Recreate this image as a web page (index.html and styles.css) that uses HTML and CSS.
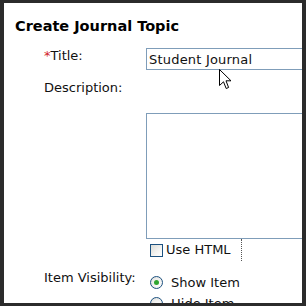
FILE: index.html
```html
<!DOCTYPE html>
<html lang="en">
<head>
    <meta charset="UTF-8">
    <title>Create Journal Topic</title>
    <link rel="stylesheet" href="styles.css">
</head>
<body>
    <div class="panel">
        <h2 class="page-title">Create Journal Topic</h2>

        <div class="form">
            <div class="row">
                <label class="label" for="topicTitle"><span class="req">*</span>Title:</label>
                <div class="field">
                    <input class="text-input" id="topicTitle" type="text" value="Student Journal">
                </div>
            </div>

            <div class="row row-desc">
                <label class="label" for="topicDesc">Description:</label>
                <div class="field field-desc">
                    <textarea class="editor" id="topicDesc"></textarea>
                    <div class="editor-foot">
                        <span class="checkbox"></span>
                        <span class="check-text">Use HTML</span>
                        <span class="sep"></span>
                    </div>
                </div>
            </div>

            <div class="row row-vis">
                <div class="label">Item Visibility:</div>
                <div class="field radios">
                    <div class="radio-row">
                        <span class="radio checked"></span>
                        <span>Show Item</span>
                    </div>
                    <div class="radio-row">
                        <span class="radio"></span>
                        <span>Hide Item</span>
                    </div>
                </div>
            </div>
        </div>

        <!-- mouse pointer over the title box -->
        <svg class="cursor" width="13" height="21" viewBox="0 0 13 21">
            <path d="M0.5 0.5 L0.5 16.5 L4.5 12.8 L7.2 19.5 L9.6 18.5 L7 11.8 L12 11.8 Z" fill="#fff" stroke="#000" stroke-width="1" stroke-linejoin="miter"/>
        </svg>
    </div>
</body>
</html>
```

FILE: styles.css
```css
* {
    margin: 0;
    padding: 0;
    box-sizing: border-box;
}

html, body {
    height: 100%;
}

body {
    background: #2b2b2b;
    padding: 3px 4px 3px 4px;
    font-family: "DejaVu Sans", Verdana, sans-serif;
    font-size: 13px;
    line-height: 16px;
    color: #111;
    overflow: hidden;
}

.panel {
    position: relative;
    background: #fff;
    height: 300px;
    overflow: hidden;
    padding: 14px 0 0 11px;
}

.page-title {
    font-size: 14.5px;
    line-height: 18px;
    font-weight: bold;
    color: #000;
}

.form {
    margin-top: 13px;
    padding-left: 29px;
}

.row {
    display: flex;
    align-items: flex-start;
}

.label {
    width: 102px;
    flex-shrink: 0;
}

.req {
    color: #d2232a;
}

.field {
    flex-shrink: 0;
}

.text-input {
    display: block;
    width: 220px;
    height: 22px;
    border: 1px solid #7f9db9;
    padding: 2px 2px;
    font-family: "DejaVu Sans", Verdana, sans-serif;
    font-size: 13px;
    line-height: 16px;
    letter-spacing: 0.2px;
    color: #111;
    outline: none;
}

.row-desc {
    margin-top: 10px;
}

.field-desc {
    padding-top: 33px;
}

.editor {
    display: block;
    width: 220px;
    height: 126px;
    border: 1px solid #7f9db9;
    resize: none;
    outline: none;
}

.editor-foot {
    display: flex;
    align-items: center;
    height: 22px;
    padding-left: 4px;
}

.checkbox {
    width: 13px;
    height: 13px;
    border: 1px solid #1c5180;
    background: linear-gradient(135deg, #dcdcd7 0%, #f4f4f2 60%, #fff 100%);
    margin-right: 3px;
}

.check-text {
    margin-right: 10px;
}

.sep {
    align-self: stretch;
    border-left: 1px dotted #555;
}

.row-vis {
    margin-top: 9px;
}

.radios {
    padding-top: 2px;
}

.radio-row {
    display: flex;
    align-items: center;
    height: 21px;
    padding-left: 4px;
}

.radio {
    position: relative;
    width: 13px;
    height: 13px;
    border: 1px solid #1c5180;
    border-radius: 50%;
    background: radial-gradient(circle at 65% 65%, #fff 0%, #ececea 60%, #d4d4cf 100%);
    margin-right: 8px;
}

.radio.checked::after {
    content: "";
    position: absolute;
    left: 3px;
    top: 3px;
    width: 5px;
    height: 5px;
    border-radius: 50%;
    background: #2fa52f;
}

.cursor {
    position: absolute;
    left: 215px;
    top: 66px;
}
```
